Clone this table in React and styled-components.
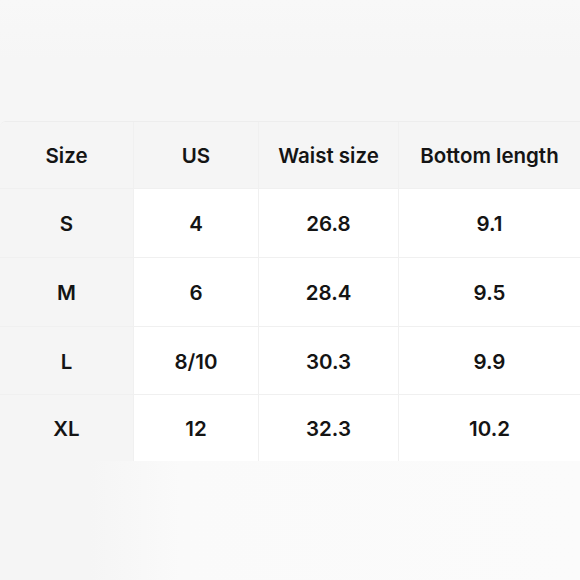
import React from "react";
import styled, { createGlobalStyle } from "styled-components";

const GlobalStyle = createGlobalStyle`
  html, body {
    margin: 0;
    padding: 0;
    background: #f6f6f6;
  }
  body {
    font-family: Inter, "Noto Sans", "Liberation Sans", sans-serif;
    color: #141414;
  }
`;

const rows = [
  ["S", "4", "26.8", "9.1"],
  ["M", "6", "28.4", "9.5"],
  ["L", "8/10", "30.3", "9.9"],
  ["XL", "12", "32.3", "10.2"],
];

const Page = styled.div`
  width: 580px;
  height: 580px;
  display: flex;
  flex-direction: column;
  padding-top: 121px;
  box-sizing: border-box;
  background: linear-gradient(180deg, #f8f8f8 0px, #f6f6f6 60px);
`;

const Table = styled.div`
  display: grid;
  grid-template-columns: 133px 125px 140px 182px;
  grid-template-rows: 67px 69px 69px 68px 66px;
  border-top: 1px solid #ededed;
  border-top-left-radius: 6px;
  overflow: hidden;
`;

const Cell = styled.div`
  display: flex;
  align-items: center;
  justify-content: center;
  padding-top: 1px;
  font-size: 20.5px;
  font-weight: 600;
  background: ${(p) => (p.$shade ? "#f5f5f5" : "#ffffff")};
  border-bottom: ${(p) => (p.$last ? "none" : "1px solid #f0f0f0")};
  border-left: ${(p) => (p.$first ? "none" : "1px solid #f0f0f0")};
`;

const Footer = styled.div`
  flex: 1;
  background: linear-gradient(90deg, #f5f5f5 0px, #f5f5f5 90px, #fafafa 180px, #fbfbfb 100%);
`;

export default function App() {
  const head = ["Size", "US", "Waist size", "Bottom length"];
  return (
    <>
      <GlobalStyle />
      <Page>
        <Table>
          {head.map((h, i) => (
            <Cell key={h} $shade $first={i === 0}>
              {h}
            </Cell>
          ))}
          {rows.map((r, ri) =>
            r.map((v, ci) => (
              <Cell
                key={ri + "-" + ci}
                $shade={ci === 0}
                $first={ci === 0}
                $last={ri === rows.length - 1}
              >
                {v}
              </Cell>
            ))
          )}
        </Table>
        <Footer />
      </Page>
    </>
  );
}
